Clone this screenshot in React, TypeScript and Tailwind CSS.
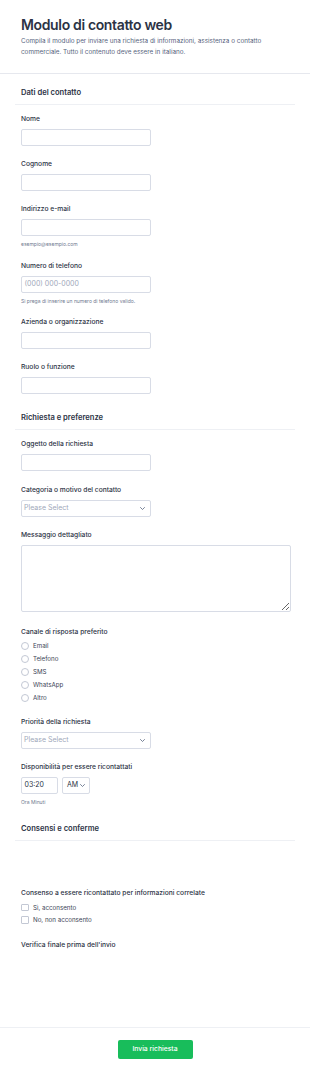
import React from "react";

const Chevron = ({ className = "" }: { className?: string }) => (
  <svg width="5" height="3" viewBox="0 0 10 6" className={className} fill="none">
    <path d="M1 1l4 4 4-4" stroke="#57647e" strokeWidth="1.6" strokeLinecap="round" strokeLinejoin="round" />
  </svg>
);

const Label = ({ children }: { children: React.ReactNode }) => (
  <div className="text-[6.7px] leading-[10px] font-medium text-[#2c3345]">{children}</div>
);

const Input = ({ placeholder }: { placeholder?: string }) => (
  <div className="mt-[5px] h-[17px] w-[130px] rounded-[2px] border border-[#d8dce6] bg-white flex items-center pl-[2.5px] text-[7px] text-[#a0a8ba]">
    {placeholder}
  </div>
);

const Select = () => (
  <div className="mt-[5px] h-[17px] w-[130px] rounded-[2px] border border-[#d8dce6] bg-white flex items-center justify-between pl-[2px] pr-[5px] text-[7px] text-[#a0a8ba]">
    <span>Please Select</span>
    <Chevron />
  </div>
);

const Helper = ({ children }: { children: React.ReactNode }) => (
  <div className="mt-[4px] text-[5px] leading-[8px] text-[#6f7a90]">{children}</div>
);

const SectionHead = ({ title, className = "" }: { title: string; className?: string }) => (
  <div className={`mx-[15px] px-[6px] pb-[5px] border-b border-[#eef0f4] ${className}`}>
    <div className="text-[7.6px] leading-[12px] font-semibold text-[#2c3345]">{title}</div>
  </div>
);

export default function App() {
  return (
    <div className="w-[310px] min-h-[1076px] bg-white font-['Inter','Noto_Sans',sans-serif] text-[#2c3345]">
      <header className="pt-[14px] px-[21px] pb-[16px] border-b border-[#e6e8ee]">
        <h1 className="text-[14px] leading-[22px] font-semibold tracking-[-0.025em] text-[#2c3345]">
          Modulo di contatto web
        </h1>
        <p className="text-[6.35px] leading-[10.5px] text-[#57647e]">
          Compila il modulo per inviare una richiesta di informazioni, assistenza o contatto commerciale. Tutto il contenuto deve essere in italiano.
        </p>
      </header>

      <SectionHead title="Dati del contatto" className="mt-[13px]" />
      <div className="px-[21px] pt-[9px]">
        <Label>Nome</Label>
        <Input />
        <div className="mt-[13px]">
          <Label>Cognome</Label>
          <Input />
        </div>
        <div className="mt-[13px]">
          <Label>Indirizzo e-mail</Label>
          <Input />
          <Helper>esempio@esempio.com</Helper>
        </div>
        <div className="mt-[13px]">
          <Label>Numero di telefono</Label>
          <Input placeholder="(000) 000-0000" />
          <Helper>Si prega di inserire un numero di telefono valido.</Helper>
        </div>
        <div className="mt-[12px]">
          <Label>Azienda o organizzazione</Label>
          <Input />
        </div>
        <div className="mt-[13px]">
          <Label>Ruolo o funzione</Label>
          <Input />
        </div>
      </div>

      <SectionHead title="Richiesta e preferenze" className="mt-[18px]" />
      <div className="px-[21px] pt-[9px]">
        <Label>Oggetto della richiesta</Label>
        <Input />
        <div className="mt-[14px]">
          <Label>Categoria o motivo del contatto</Label>
          <Select />
        </div>
        <div className="mt-[13px]">
          <Label>Messaggio dettagliato</Label>
          <textarea
            className="mt-[5px] block h-[67px] w-[270px] rounded-[2px] border border-[#d8dce6] bg-white outline-none"
            aria-label="Messaggio dettagliato"
          />
        </div>
        <div className="mt-[15px]">
          <Label>Canale di risposta preferito</Label>
          <div className="mt-[2px] flex flex-col">
            {["Email", "Telefono", "SMS", "WhatsApp", "Altro"].map((o) => (
              <div key={o} className="h-[13px] flex items-center gap-[4px]">
                <span className="w-[8px] h-[8px] rounded-full border border-[#c3c8d4] bg-white" />
                <span className="text-[6.2px] text-[#3c4457]">{o}</span>
              </div>
            ))}
          </div>
        </div>
        <div className="mt-[13px]">
          <Label>Priorità della richiesta</Label>
          <Select />
        </div>
        <div className="mt-[13px]">
          <Label>Disponibilità per essere ricontattati</Label>
          <div className="mt-[5px] flex gap-[4px]">
            <div className="h-[17px] w-[37px] rounded-[2px] border border-[#d8dce6] flex items-center pl-[2.5px] text-[7px] text-[#2c3345]">
              03:20
            </div>
            <div className="h-[17px] w-[28px] rounded-[2px] border border-[#d8dce6] flex items-center justify-between pl-[4px] pr-[4px] text-[7px] text-[#2c3345]">
              <span>AM</span>
              <Chevron />
            </div>
          </div>
          <Helper>Ora Minuti</Helper>
        </div>
      </div>

      <SectionHead title="Consensi e conferme" className="mt-[17px]" />
      <div className="px-[21px] pt-[47px]">
        <Label>Consenso a essere ricontattato per informazioni correlate</Label>
        <div className="mt-[3px] flex flex-col">
          {["Sì, acconsento", "No, non acconsento"].map((o) => (
            <div key={o} className="h-[12.5px] flex items-center gap-[4.5px]">
              <span className="w-[7.5px] h-[7.5px] rounded-[1px] border border-[#c3c8d4] bg-white" />
              <span className="text-[6.2px] text-[#3c4457]">{o}</span>
            </div>
          ))}
        </div>
        <div className="mt-[14px]">
          <Label>Verifica finale prima dell'invio</Label>
        </div>
      </div>

      <footer className="mt-[77px] border-t border-[#eef0f4] pt-[12px] pb-[17px] flex justify-center">
        <button className="h-[19px] w-[75px] rounded-[2px] bg-[#18bd5b] text-white text-[6.8px] font-medium">
          Invia richiesta
        </button>
      </footer>
    </div>
  );
}
